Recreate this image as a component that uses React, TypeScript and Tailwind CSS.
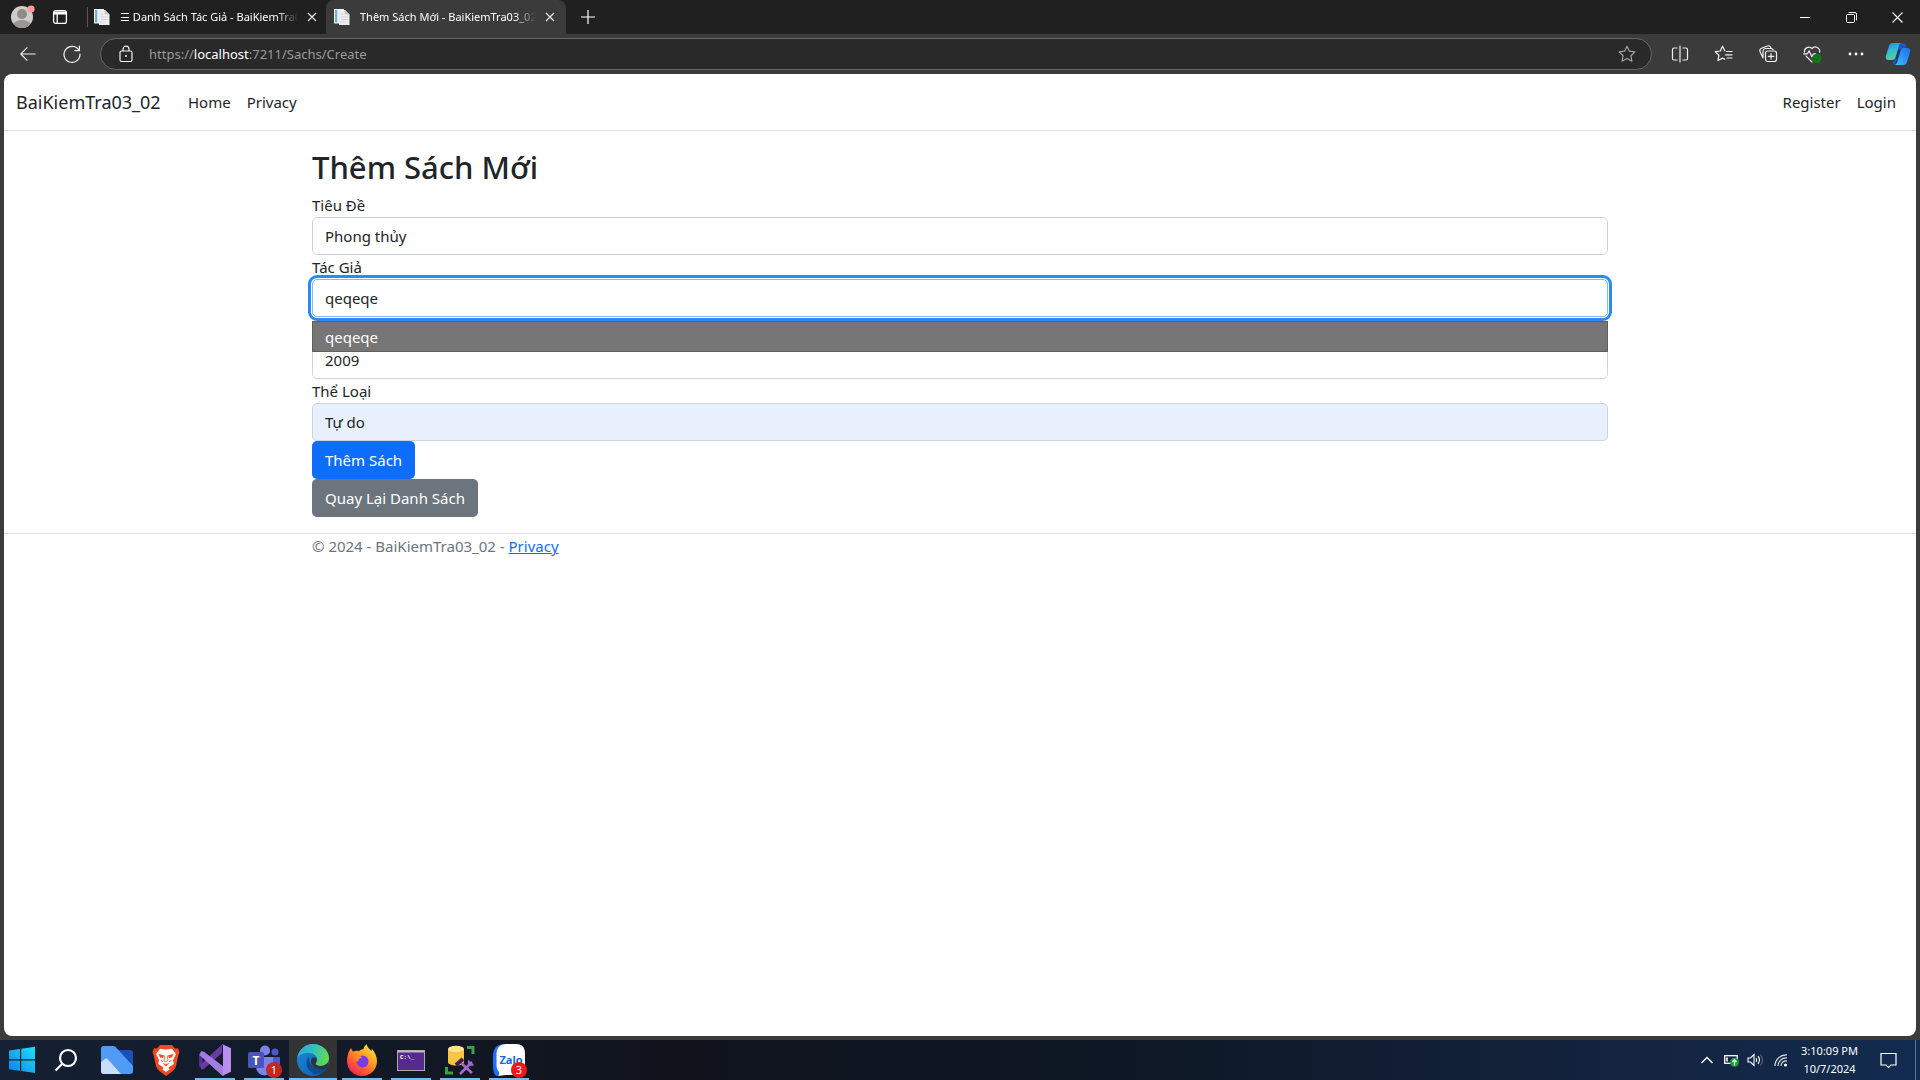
import React from "react";

/* ---------- Browser chrome icons ---------- */

type IconProps = { children: React.ReactNode; size?: number };

function Line({ children, size = 20 }: IconProps) {
  return (
    <svg
      width={size}
      height={size}
      viewBox="0 0 20 20"
      fill="none"
      stroke="currentColor"
      strokeWidth="1.2"
      strokeLinecap="round"
      strokeLinejoin="round"
      aria-hidden="true"
    >
      {children}
    </svg>
  );
}

function PageFavicon() {
  return (
    <svg width="16" height="18" viewBox="0 0 16 18" className="shrink-0" aria-hidden="true">
      <path d="M0 1h10v14.500H0z" fill="#eef3f6" />
      <path d="M1 2h2.300v12.500H1z" fill="#6fb1d6" />
      <path d="M5 2h6l4.500 4.500V17H5z" fill="#eceded" />
      <path d="M11 2v4.500h4.500z" fill="#c3c8cc" />
      <path d="M6.500 6h3M6.500 9h7M6.500 11.500h7M6.500 14h5" stroke="#d3d7da" strokeWidth="1" />
    </svg>
  );
}

function CloseGlyph() {
  return (
    <svg width="10" height="10" viewBox="0 0 10 10" stroke="#e6e6e6" strokeWidth="1.3" aria-hidden="true">
      <path d="M1 1l8 8M9 1L1 9" />
    </svg>
  );
}

function Tab({ title, active }: { title: string; active?: boolean }) {
  return (
    <div
      className={
        active
          ? "flex h-[34px] w-60 items-center rounded-t-lg bg-[#3b3b3b] pl-2 pr-2"
          : "flex h-[34px] w-[238px] items-center pl-1.5 pr-1.5"
      }
    >
      <PageFavicon />
      <span className="ml-2.5 flex-1 overflow-hidden whitespace-nowrap text-[11px] leading-5 text-white [mask-image:linear-gradient(to_right,black_88%,transparent)]">
        {title}
      </span>
      <button type="button" aria-label="Close tab" className="ml-1.5 flex h-5 w-4 items-center justify-center">
        <CloseGlyph />
      </button>
    </div>
  );
}

function TabStrip() {
  return (
    <div className="flex h-[34px] items-center bg-[#202020] text-white">
      <button type="button" aria-label="Profile" className="ml-[11px] flex w-6 justify-center">
        <svg width="24" height="24" viewBox="0 0 24 24" aria-hidden="true">
          <clipPath id="avatar">
            <circle cx="11" cy="12" r="11" />
          </clipPath>
          <g clipPath="url(#avatar)">
            <rect width="24" height="24" fill="#cfccc9" />
            <circle cx="11" cy="9" r="5" fill="#8f8b88" />
            <path d="M2 22c0-5 4-7 9-7s9 2 9 7v2H2z" fill="#9a9693" />
          </g>
          <circle cx="20" cy="4" r="3.6" fill="#ff9a9e" />
        </svg>
      </button>
      <button type="button" aria-label="Workspaces" className="ml-[17px] flex w-4 justify-center">
        <svg width="16" height="16" viewBox="0 0 16 16" fill="none" stroke="#fff" strokeWidth="1.3" aria-hidden="true">
          <rect x="1.6" y="1.6" width="12.8" height="12.8" rx="2.2" />
          <path d="M2 4h12" strokeWidth="3" />
          <path d="M5.2 5v9" />
        </svg>
      </button>
      <div className="ml-[19px] h-5 w-px bg-[#555]" />
      <Tab title="☰ Danh Sách Tác Giả - BaiKiemTra03_02" />
      <Tab title="Thêm Sách Mới - BaiKiemTra03_02" active />
      <button type="button" aria-label="New tab" className="ml-3 flex h-5 w-5 items-center justify-center">
        <svg width="14" height="14" viewBox="0 0 14 14" stroke="#fff" strokeWidth="1.2" aria-hidden="true">
          <path d="M7 0v14M0 7h14" />
        </svg>
      </button>
      <div className="ml-auto flex">
        <button type="button" aria-label="Minimize" className="flex h-[34px] w-[46px] items-center justify-center">
          <svg width="10" height="10" viewBox="0 0 10 10" stroke="#fff" aria-hidden="true">
            <path d="M0 5.5h10" />
          </svg>
        </button>
        <button type="button" aria-label="Restore" className="flex h-[34px] w-[46px] items-center justify-center">
          <svg width="11" height="11" viewBox="0 0 11 11" fill="none" stroke="#fff" aria-hidden="true">
            <rect x="0.5" y="2.5" width="8" height="8" rx="1.2" />
            <path d="M2.7 0.6H9a1.5 1.5 0 0 1 1.5 1.5v6.2" />
          </svg>
        </button>
        <button type="button" aria-label="Close" className="flex h-[34px] w-[46px] items-center justify-center">
          <svg width="11" height="11" viewBox="0 0 11 11" stroke="#fff" strokeWidth="1.1" aria-hidden="true">
            <path d="M0.5 0.5l10 10M10.5 0.5l-10 10" />
          </svg>
        </button>
      </div>
    </div>
  );
}

function ToolButton({ label, children }: { label: string; children: React.ReactNode }) {
  return (
    <button type="button" aria-label={label} className="flex h-8 w-11 items-center justify-center text-[#f0f0f0]">
      {children}
    </button>
  );
}

function CopilotIcon() {
  return (
    <svg width="26" height="24" viewBox="0 0 26 24" aria-hidden="true">
      <defs>
        <linearGradient id="cpA" x1="0" y1="0" x2="0.4" y2="1">
          <stop offset="0" stopColor="#1b8be8" />
          <stop offset="0.5" stopColor="#35b8d6" />
          <stop offset="1" stopColor="#5fd48b" />
        </linearGradient>
        <linearGradient id="cpB" x1="1" y1="0" x2="0" y2="1">
          <stop offset="0" stopColor="#1f6fe8" />
          <stop offset="0.6" stopColor="#2f9dff" />
          <stop offset="1" stopColor="#35c5ff" />
        </linearGradient>
      </defs>
      <path d="M12 1h6c2 0 2.500 1 3 3l.8 3h-5c-2 0-2.600 1-3.200 3L11 20c-.6 2-1.500 3-3.500 3" fill="#1756c4" />
      <path d="M7.500 1H17c-2 0-2.700 1.200-3.300 3.200L10.500 15c-.6 2-1.600 3-3.600 3H3.600C1.200 18 .2 16.300.9 14L4 4c.6-2 1.600-3 3.500-3z" fill="url(#cpA)" />
      <path d="M18.500 23H9c2 0 2.700-1.200 3.300-3.200L15.500 9c.6-2 1.600-3 3.600-3h3.300c2.400 0 3.400 1.700 2.700 4L22 20c-.6 2-1.600 3-3.500 3z" fill="url(#cpB)" />
      <path d="M14 8l-2.500 9" stroke="#123a86" strokeWidth="1.500" />
    </svg>
  );
}

function Toolbar() {
  return (
    <div className="flex h-10 items-center bg-[#3b3b3b] text-white">
      <div className="flex pl-1.5">
        <ToolButton label="Back">
          <Line size={18}>
            <path d="M18 10H2M9 3L2 10l7 7" />
          </Line>
        </ToolButton>
        <ToolButton label="Refresh">
          <Line size={20}>
            <path d="M17 6.500A8 8 0 1 0 18 10M17.400 2v4.600h-4.600" />
          </Line>
        </ToolButton>
      </div>
      <div className="ml-1.5 flex h-8 flex-1 items-center rounded-full border border-[#666] bg-[#292929] pl-4">
        <svg width="18" height="18" viewBox="0 0 18 18" fill="none" stroke="#f2f2f2" strokeWidth="1.2" aria-hidden="true">
          <rect x="3" y="6" width="12" height="10.500" rx="1.500" />
          <path d="M6 6V4.200a3 3 0 0 1 6 0V6" />
          <circle cx="9" cy="11" r="1" fill="#f2f2f2" stroke="none" />
        </svg>
        <a href="#address" className="ml-3.5 flex-1 text-[13px] leading-5 text-[#9a9a9a]">
          https://<span className="text-white">localhost</span>:7211/Sachs/Create
        </a>
        <button type="button" aria-label="Add to favorites" className="mr-3.5 text-[#a3a3a3]">
          <Line size={20}>
            <path d="M10 2.200l2.400 5 5.500.7-4 3.800 1 5.500L10 14.500l-4.900 2.700 1-5.500-4-3.800 5.500-.7z" />
          </Line>
        </button>
      </div>
      <div className="flex pl-1.5 pr-0.5">
        <ToolButton label="Split screen">
          <Line size={20}>
            <path d="M10 2v16M7 4H4A1.500 1.500 0 0 0 2.500 5.500v9A1.500 1.500 0 0 0 4 16H7M13 4h3A1.500 1.500 0 0 1 17.500 5.500v9a1.500 1.500 0 0 1-1.500 1.500H13" />
          </Line>
        </ToolButton>
        <ToolButton label="Favorites">
          <Line size={20}>
            <path d="M10.800 6.800L8.500 2.200 6.300 7l-5 .7 3.600 3.500-.9 5.300 4.500-2.400 2.300 1.200M12.500 7.500H18M11.500 10.800H18M13 14H18" />
          </Line>
        </ToolButton>
        <ToolButton label="Collections">
          <Line size={20}>
            <rect x="7.500" y="7" width="11" height="10.500" rx="2.200" />
            <path d="M13 9.500v5.600M10.200 12.300h5.600M5 14L2.200 8A2.600 2.600 0 0 1 3.500 4.200l6-2.200a2.600 2.600 0 0 1 3.300 1.500M5 14V7.500a3 3 0 0 1 3-3h4.500a3 3 0 0 1 2.500 1" />
          </Line>
        </ToolButton>
        <ToolButton label="Browser essentials">
          <Line size={20}>
            <path d="M2.500 8.200A4.400 4.400 0 0 1 10 4.500a4.400 4.400 0 0 1 7.600 3.700M1.500 9.800h4l1.600-3 2.700 6 1.700-3h2M4 12l6 6" />
            <circle cx="15" cy="14.500" r="4.500" fill="#107c10" stroke="none" />
            <path d="M13 14.600l1.400 1.400 2.600-2.600" stroke="#0a4d0a" strokeWidth="1" />
          </Line>
        </ToolButton>
        <ToolButton label="Settings and more">
          <svg width="16" height="4" viewBox="0 0 16 4" fill="#fff" aria-hidden="true">
            <circle cx="2" cy="2" r="1.400" />
            <circle cx="8" cy="2" r="1.400" />
            <circle cx="14" cy="2" r="1.400" />
          </svg>
        </ToolButton>
        <button type="button" aria-label="Copilot" className="flex h-8 w-10 items-center justify-center">
          <CopilotIcon />
        </button>
      </div>
    </div>
  );
}

/* ---------- Web page ---------- */

const inputBase = "block h-[38px] w-full rounded-[5px] border px-3 text-[15px] text-[#212529]";

function Field({ id, label, value, autofill }: { id: string; label: string; value: string; autofill?: boolean }) {
  return (
    <div>
      <label htmlFor={id} className="block h-6 text-[15px] leading-6">
        {label}
      </label>
      <input
        id={id}
        type="text"
        defaultValue={value}
        className={autofill ? inputBase + " border-[#ced4da] bg-[#e8f0fe]" : inputBase + " border-[#ced4da] bg-white"}
      />
    </div>
  );
}

function AuthorField() {
  return (
    <div className="relative">
      <label htmlFor="author" className="block h-6 text-[15px] leading-6">
        Tác Giả
      </label>
      <input
        id="author"
        type="text"
        defaultValue="qeqeqe"
        className={inputBase + " border-[#86b7fe] bg-white outline-3 outline-offset-1 outline-[#2a8af6]"}
      />
      <div
        role="listbox"
        aria-label="Tác Giả"
        className="absolute inset-x-0 top-full z-10 mt-1 h-[31px] border border-[#5f5f5f] bg-[#767676] px-3 text-[15px] leading-[30px] text-white"
      >
        <div role="option" aria-selected="true">
          qeqeqe
        </div>
      </div>
    </div>
  );
}

function WebPage() {
  return (
    <div className="flex-1 overflow-hidden rounded-lg bg-white text-[#212529]">
      <header className="mb-4 flex h-[57px] items-center border-b border-[#dee2e6] px-3 text-[15px]">
        <a href="#brand" className="mr-4 w-[148px] text-lg">
          BaiKiemTra03_02
        </a>
        <nav className="flex flex-1">
          <a href="#home" className="px-2">
            Home
          </a>
          <a href="#privacy" className="px-2">
            Privacy
          </a>
          <a href="#register" className="ml-auto px-2">
            Register
          </a>
          <a href="#login" className="px-2">
            Login
          </a>
        </nav>
      </header>
      <main className="mx-auto max-w-[1320px] px-3">
        <h2 className="mb-1.5 text-[31px] font-medium leading-10">Thêm Sách Mới</h2>
        <form>
          <Field id="title" label="Tiêu Đề" value="Phong thủy" />
          <AuthorField />
          <input
            type="text"
            aria-label="Năm Xuất Bản"
            defaultValue="2009"
            className={inputBase + " mt-6 border-[#ced4da] bg-white"}
          />
          <Field id="genre" label="Thể Loại" value="Tự do" autofill />
          <button type="button" className="block h-[38px] rounded-[5px] bg-[#0d6efd] px-[13px] text-[15px] text-white">
            Thêm Sách
          </button>
        </form>
        <a
          href="#list"
          className="inline-block h-[38px] rounded-[5px] bg-[#6c757d] px-[13px] align-top text-[15px] leading-[38px] text-white"
        >
          Quay Lại Danh Sách
        </a>
      </main>
      <footer className="mt-4 border-t border-[#dee2e6] text-[15px] leading-6 text-[#6c757d]">
        <div className="mx-auto max-w-[1320px] px-3">
          © 2024 - BaiKiemTra03_02 -{" "}
          <a href="#privacy" className="text-[#0d6efd] underline">
            Privacy
          </a>
        </div>
      </footer>
    </div>
  );
}

/* ---------- Taskbar ---------- */

function Task({
  label,
  running,
  active,
  children,
}: {
  label: string;
  running?: boolean;
  active?: boolean;
  children: React.ReactNode;
}) {
  return (
    <button
      type="button"
      aria-label={label}
      className={active ? "flex h-10 w-12 flex-col items-center bg-[#333]" : "flex h-10 w-12 flex-col items-center"}
    >
      <span className="flex h-[38px] items-center pt-0.5">{children}</span>
      {active ? (
        <span className="h-0.5 w-12 bg-[#76b9ed]" />
      ) : running ? (
        <span className="h-0.5 w-10 bg-[#76b9ed]" />
      ) : null}
    </button>
  );
}

function Taskbar() {
  return (
    <div className="flex h-10 items-center bg-[linear-gradient(to_right,#142033,#10131c_35%,#0e1826_60%,#14243f_85%,#122c50)] text-white">
      <button type="button" aria-label="Start" className="flex h-10 w-11 items-center justify-center">
        <svg width="28" height="28" viewBox="0 0 28 28" aria-hidden="true">
          <defs>
            <linearGradient id="win" x1="1" y1="0" x2="0" y2="1">
              <stop offset="0" stopColor="#1fe0fb" />
              <stop offset="1" stopColor="#0f7fe6" />
            </linearGradient>
          </defs>
          <path d="M1 4.500l11-1.600v10.400H1zM13.200 2.700L27 .8v12.500H13.200zM1 14.500h11v10.400L1 23.300zM13.200 14.500H27V27l-13.800-1.900z" fill="url(#win)" />
        </svg>
      </button>
      <button type="button" aria-label="Search" className="flex h-10 w-11 items-center justify-center">
        <svg width="24" height="24" viewBox="0 0 24 24" fill="none" stroke="#fff" strokeWidth="2.200" aria-hidden="true">
          <circle cx="14" cy="10" r="8" />
          <path d="M8.300 15.700L1.500 22.500" />
        </svg>
      </button>
      <div className="ml-[5px] flex gap-px">
        <Task label="Files">
          <svg width="32" height="28" viewBox="0 0 32 28" aria-hidden="true">
            <path d="M16 4h13a3 3 0 0 1 3 3v18L16 12z" fill="#1650b8" />
            <path d="M0 3a3 3 0 0 1 3-3h9c2 0 3 1 4.500 3L32 20v5a3 3 0 0 1-3 3H3a3 3 0 0 1-3-3z" fill="#4f9bf5" />
            <path d="M0 16l4-3c1-.7 2-.6 3 .4L20 28H3a3 3 0 0 1-3-3z" fill="#c9defa" />
          </svg>
        </Task>
        <Task label="Brave">
          <svg width="28" height="32" viewBox="0 0 28 32" aria-hidden="true">
            <path d="M8 1h12l3 3.500 3-.3 1.500 4-1 2.500L24 22c-.6 2-2 4-4 5.500L14 32l-6-4.500C6 26 4.600 24 4 22L1.500 10.700l-1-2.500 1.500-4 3 .3z" fill="#f5491f" />
            <path d="M14 5.500l6-.8 4 5.300-3 6 .8 4-5.300 3.500 1 2L14 28l-3.500-2.500 1-2L6.200 20l.8-4L4 10l4-5.300z" fill="#fff" />
            <path d="M6.500 10l5.500 1.300-1 2.700-3-.5zM21.500 10L16 11.300l1 2.700 3-.5zM10.500 19l3.500 1 3.500-1-3.500 3.200zM8 15.500l3.500 2-1.500.5zM20 15.500l-3.500 2 1.500.5z" fill="#f5491f" />
            <path d="M12.700 11.500l-.7 5 2 1.500 2-1.500-.7-5" stroke="#f5491f" strokeWidth="0.800" fill="none" />
          </svg>
        </Task>
        <Task label="Visual Studio" running>
          <svg width="32" height="32" viewBox="0 0 32 32" aria-hidden="true">
            <path d="M0 10l3.500-2.500V25L0 22z" fill="#5b2f92" />
            <path d="M2 25c1 .6 2 .5 3-.3L23 9V0.500L1.500 20.500z" fill="#6a3aa5" />
            <path d="M2 7.600c1-.7 2-.6 3 .2L25 23v8.500h-2L0.500 11z" fill="#a47be0" />
            <path d="M23 0l9 4.200v23.600L23 32c1-1 1-1.500 1-3V3c0-1.500 0-2-1-3z" fill="#b790f0" />
          </svg>
        </Task>
        <Task label="Teams" running>
          <span className="relative">
            <svg width="32" height="32" viewBox="0 0 32 32" aria-hidden="true">
              <circle cx="17" cy="6.500" r="5" fill="#7b83eb" />
              <circle cx="27" cy="8" r="3.500" fill="#5059c9" />
              <path d="M22 13h10v9a6 6 0 0 1-10 4z" fill="#5059c9" />
              <path d="M8 13h17v10a8.500 8.500 0 0 1-17 0z" fill="#7b83eb" />
              <rect x="0" y="8" width="16" height="16" rx="1.500" fill="#4b53bc" />
              <text x="8" y="20.500" textAnchor="middle" fontSize="12" fontWeight="700" fill="#fff">
                T
              </text>
            </svg>
            <span className="absolute -right-0.5 top-[18px] flex h-4 w-4 items-center justify-center rounded-full bg-[#c4281c] text-[11px] leading-4">
              1
            </span>
          </span>
        </Task>
        <Task label="Edge" active>
          <svg width="32" height="32" viewBox="0 0 32 32" aria-hidden="true">
            <defs>
              <linearGradient id="edA" x1="0" y1="0.300" x2="1" y2="0.500">
                <stop offset="0" stopColor="#2aa8dc" />
                <stop offset="0.500" stopColor="#35c1b8" />
                <stop offset="1" stopColor="#63dc4c" />
              </linearGradient>
              <linearGradient id="edB" x1="0" y1="0" x2="1" y2="1">
                <stop offset="0" stopColor="#1b8fdc" />
                <stop offset="1" stopColor="#0b57a8" />
              </linearGradient>
            </defs>
            <circle cx="16" cy="16" r="16" fill="url(#edB)" />
            <path d="M.2 14C1.500 6 8 0 16 0c9 0 16 6.500 16 14 0 5-4 8-8.500 8-3.500 0-5-1.500-5-2.500 0-.8 1.500-1.500 1.500-4C20 12 17 9 12 9 6 9 1.500 11 .2 14z" fill="url(#edA)" />
            <path d="M12 13c-5 4-3 14 6 17 5 .5 9-2 12-6.500-4 2-8 2-11.500.5C14 22 11.500 18 12 13z" fill="#0c4a94" />
            <path d="M20 15.500c0 2.500-1.500 3.200-1.500 4 0 1 1.500 2.500 5 2.500 3 0 5.800-1.200 7.300-3.500L31 22l-1.500 2c-4 2-7.500 1.500-11 0-4-2-5.500-6-4-9.500 1-1.500 5.500-1.800 5.500 1z" fill="#333" />
          </svg>
        </Task>
        <Task label="Firefox" running>
          <svg width="30" height="32" viewBox="0 0 30 32" aria-hidden="true">
            <defs>
              <linearGradient id="ff" x1="0.900" y1="0" x2="0.200" y2="1">
                <stop offset="0" stopColor="#fff04a" />
                <stop offset="0.400" stopColor="#ffa01f" />
                <stop offset="0.700" stopColor="#ff5a36" />
                <stop offset="1" stopColor="#ee1a5c" />
              </linearGradient>
            </defs>
            <path d="M4 4c.5 1.500 1 2.500 2 3.500C8 6.500 10 6.500 12 7c1.500-1 3-2 4.500-2C17 3 18 1.500 19.500 0c.5 3 3 5 5 7 .3-.8.300-1.500.1-2.500C28 8 30 12.500 30 17c0 8.500-6.500 15-15 15S0 25.500 0 17C0 12 1.500 7.500 4 4z" fill="url(#ff)" />
            <circle cx="15.500" cy="17.500" r="6" fill="#7a3ae0" />
            <path d="M9 12c3-1 5 0 6 2-3 0-4 1.500-3.500 3.500-2 0-4-2-2.500-5.500z" fill="#ff8c26" />
          </svg>
        </Task>
        <Task label="Command Prompt" running>
          <svg width="28" height="21" viewBox="0 0 28 21" aria-hidden="true">
            <rect x="0.500" y="0.500" width="27" height="20" fill="#562a8c" stroke="#a9a9a9" />
            <path d="M1 1.500h26" stroke="#bcbcbc" strokeWidth="2" />
            <text x="3" y="9" fontSize="6" fontWeight="700" fill="#fff" fontFamily="Liberation Mono, monospace">
              C:\_
            </text>
          </svg>
        </Task>
        <Task label="SQL Server tools" running>
          <svg width="30" height="30" viewBox="0 0 30 30" fill="none" aria-hidden="true">
            <path d="M3 4v13c0 2 3.500 3.500 8 3.500s8-1.500 8-3.500V4z" fill="#f6c544" />
            <ellipse cx="11" cy="4" rx="8" ry="3.200" fill="#ffe28a" />
            <path d="M22 2.500h6V9M1.500 22v6H8" stroke="#37a348" strokeWidth="3" />
            <path d="M16 18l11 10M27 17L15 29" stroke="#a56bd4" strokeWidth="2.500" />
            <path d="M11 20l7-6" stroke="#3a1d55" strokeWidth="4" />
            <path d="M24 15.500c-1 3 1 5 4.500 4" stroke="#a56bd4" strokeWidth="2" />
          </svg>
        </Task>
        <Task label="Zalo" running>
          <span className="relative flex h-8 w-8 items-center justify-center text-[11px] font-bold text-[#1468e8]">
            <svg width="32" height="32" viewBox="0 0 32 32" className="absolute inset-0" aria-hidden="true">
              <path d="M12 0h10c7 0 10 3 10 10v10c0 7-3 10-10 10H12c-3 1-6 2-9 2l-2-3c-1-3-1-6-1-9V12C0 4 4 0 12 0z" fill="#1f6fff" />
              <path d="M14 0h8c7 0 10 3 10 10v10c0 7-3 11-10 11h-9c-3 0-5 1-8 1 1-1 1.500-2 1-4-2-2-2.500-5-2.500-8V11C3.500 4 6 0 14 0z" fill="#fff" />
            </svg>
            <span className="relative pl-1">Zalo</span>
            <span className="absolute -right-0.5 top-[18px] flex h-4 w-4 items-center justify-center rounded-full bg-[#f01818] text-[11px] font-normal leading-4 text-white">
              3
            </span>
          </span>
        </Task>
      </div>
      <div className="ml-auto flex h-10 items-center">
        <button type="button" aria-label="Show hidden icons" className="flex w-6 justify-center">
          <svg width="12" height="8" viewBox="0 0 12 8" fill="none" stroke="#fff" strokeWidth="1.300" aria-hidden="true">
            <path d="M0.500 7L6 1.500 11.500 7" />
          </svg>
        </button>
        <button type="button" aria-label="Battery" className="flex w-6 justify-center">
          <svg width="15" height="14" viewBox="0 0 15 14" fill="none" aria-hidden="true">
            <rect x="0.700" y="2.700" width="12.500" height="7.600" stroke="#fff" strokeWidth="1.300" />
            <path d="M3 4.500v4" stroke="#fff" strokeWidth="1.600" />
            <circle cx="10.500" cy="9.200" r="4.500" fill="#1d9b3a" />
            <path d="M10.500 12.500V8M8.500 9L10.500 6.500l2 2.500" stroke="#c9f5c9" strokeWidth="1.400" />
          </svg>
        </button>
        <button type="button" aria-label="Volume" className="flex w-6 justify-center">
          <svg width="17" height="14" viewBox="0 0 17 14" fill="none" stroke="#fff" strokeWidth="1.100" aria-hidden="true">
            <path d="M1 5h2.500L7 1.500v11L3.500 9H1zM9 5c.9 1.200.9 2.800 0 4M11 3.200c1.800 2.300 1.800 5.300 0 7.600" />
            <path d="M13.300 1.500c2.600 3.300 2.600 7.700 0 11" stroke="#667" />
          </svg>
        </button>
        <button type="button" aria-label="Network" className="flex w-7 justify-center">
          <svg width="14" height="14" viewBox="0 0 14 14" fill="none" stroke="#dfe4ea" strokeWidth="1.200" aria-hidden="true">
            <path d="M1 13C1 6.500 6.500 1.500 13 2M4 13c0-4.500 4-8.500 9-8M7 13c0-3.200 2.500-5.500 6-5" />
            <circle cx="11.500" cy="12" r="1.500" fill="#fff" stroke="none" />
          </svg>
        </button>
        <div className="w-[69px] text-center text-[11px] leading-[18px]">
          <div>3:10:09 PM</div>
          <div>10/7/2024</div>
        </div>
        <button type="button" aria-label="Notifications" className="flex w-[49px] justify-center">
          <svg width="17" height="17" viewBox="0 0 17 17" fill="none" stroke="#fff" strokeWidth="1.200" aria-hidden="true">
            <path d="M1 1.500h15v11.500h-5L8.500 15.500 6 13H1z" />
          </svg>
        </button>
        <div className="ml-0.5 h-10 w-[5px] border-l border-[#5f7490]" />
      </div>
    </div>
  );
}

export default function App() {
  return (
    <div className="flex min-h-screen flex-col bg-[#3b3b3b] font-['Noto_Sans',sans-serif]">
      <TabStrip />
      <Toolbar />
      <div className="flex flex-1 px-1 pb-1">
        <WebPage />
      </div>
      <Taskbar />
    </div>
  );
}
